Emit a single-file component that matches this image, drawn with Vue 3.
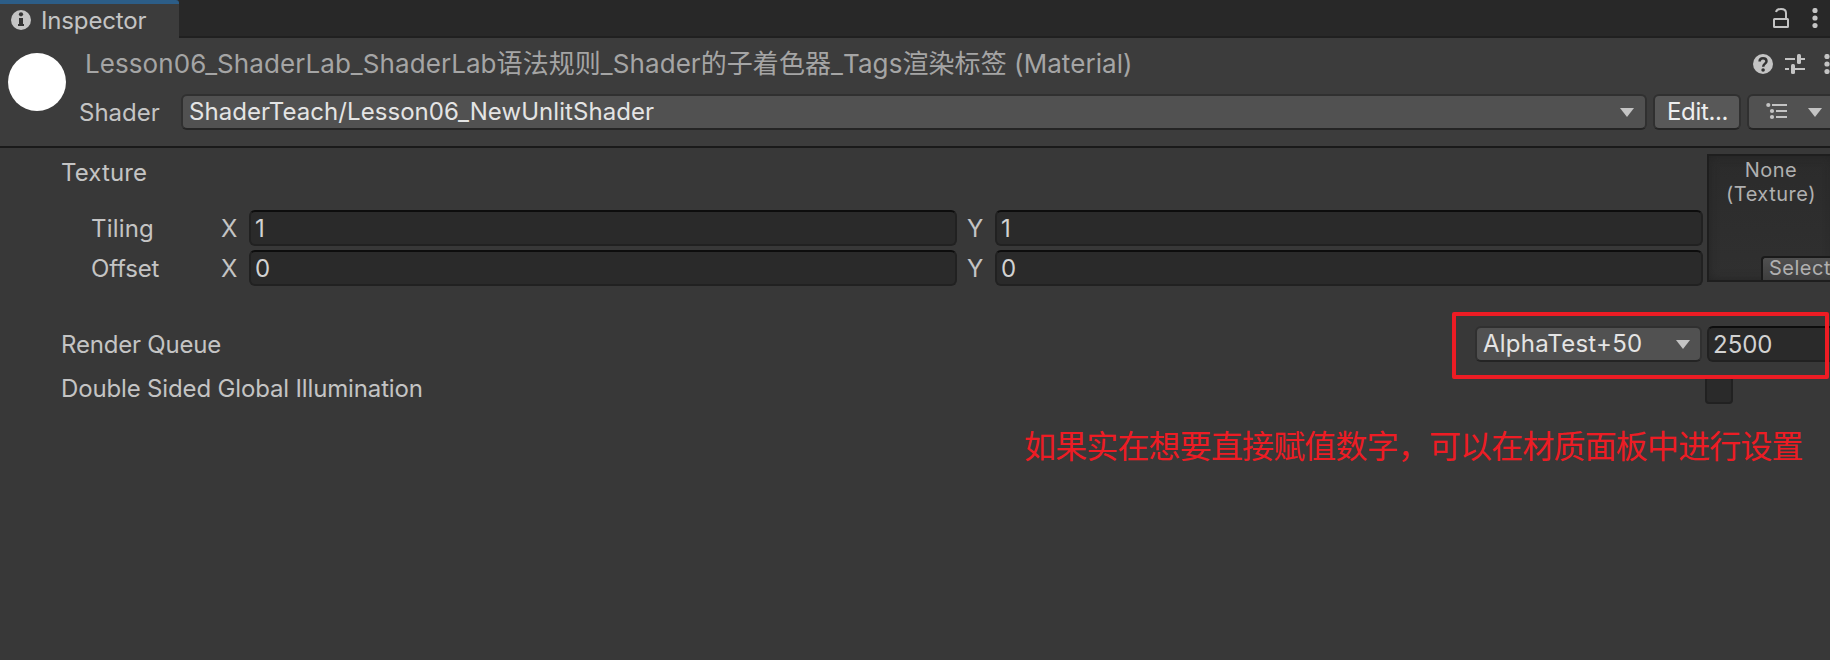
<script setup>
const vectors = [
  { label: 'Tiling', x: '1', y: '1' },
  { label: 'Offset', x: '0', y: '0' },
]
</script>

<template>
  <div class="inspector">
    <div class="tabs">
      <div class="tab">
        <svg class="info" width="20" height="20" viewBox="0 0 20 20">
          <circle cx="10" cy="10" r="10" fill="#c4c4c4" />
          <circle cx="10" cy="4.300" r="2.100" fill="#333" />
          <path d="M8 8h4v6h1v2H7v-2h1z" fill="#333" />
        </svg>
        <span class="t tab-name">Inspector</span>
      </div>
      <svg class="lock" width="18" height="22" viewBox="0 0 18 22" fill="none" stroke="#c4c4c4" stroke-width="2">
        <rect x="2" y="12" width="14" height="8" rx="0.5" />
        <path d="M4 5C4.500 3 6.500 2 9 2C12 2 14 3.500 14 6V12" />
      </svg>
      <svg class="dots" width="6" height="20" viewBox="0 0 6 20" fill="#c4c4c4">
        <circle cx="3" cy="2.500" r="2.600" /><circle cx="3" cy="10" r="2.600" /><circle cx="3" cy="17.500" r="2.600" />
      </svg>
    </div>

    <div class="header">
      <div class="preview"><div class="ball"></div></div>
      <div class="head-main">
        <div class="title-row">
          <span class="t title">Lesson06_ShaderLab_ShaderLab语法规则_Shader的子着色器_Tags渲染标签 (Material)</span>
          <svg class="help" width="20" height="20" viewBox="0 0 20 20">
            <circle cx="10" cy="10" r="10" fill="#c4c4c4" />
            <path d="M6.600 7.600C6.600 5.300 8 4.200 10 4.200C12.100 4.200 13.500 5.400 13.500 7.200C13.500 9.700 10.200 9.600 10.200 12.800" fill="none" stroke="#333" stroke-width="2.500" />
            <circle cx="10.100" cy="16" r="1.800" fill="#333" />
          </svg>
          <svg class="sliders" width="20" height="20" viewBox="0 0 20 20" fill="#c4c4c4">
            <path d="M0 4h10v2H0zM16 4h4v2h-4zM0 14h4v2H0zM10 14h10v2H10z" />
            <rect x="12" y="0" width="4" height="10" rx="1.500" /><rect x="6" y="10" width="4" height="10" rx="1.500" />
          </svg>
          <svg class="dots2" width="6" height="20" viewBox="0 0 6 20" fill="#c4c4c4">
            <circle cx="3" cy="2.500" r="2.600" /><circle cx="3" cy="10" r="2.600" /><circle cx="3" cy="17.500" r="2.600" />
          </svg>
        </div>
        <div class="shader-row">
          <span class="t shader-label">Shader</span>
          <div class="btn shader-drop">
            <span class="t shader-val">ShaderTeach/Lesson06_NewUnlitShader</span>
            <svg class="arrow" width="14" height="9" viewBox="0 0 14 9"><path d="M0 0H14L7 9z" fill="#c4c4c4" /></svg>
          </div>
          <div class="btn edit"><span class="t edit-text">Edit...</span></div>
          <div class="btn preset">
            <svg width="22" height="18" viewBox="0 0 22 18" fill="#c4c4c4">
              <circle cx="2.300" cy="3" r="2.100" /><circle cx="6" cy="9" r="2.100" /><circle cx="6" cy="15" r="2.100" />
              <path d="M6 2h15v2H6zM10 8h11v2H10zM10 14h11v2H10z" />
            </svg>
            <svg class="arrow2" width="14" height="9" viewBox="0 0 14 9"><path d="M0 0H14L7 9z" fill="#c4c4c4" /></svg>
          </div>
        </div>
      </div>
    </div>

    <div class="body">
      <div class="texture">
        <div class="tex-main">
          <div class="t tex-label">Texture</div>
          <div v-for="v in vectors" :key="v.label" class="vec">
            <span class="t vec-label" :class="v.label.toLowerCase()">{{ v.label }}</span>
            <span class="t axis-x">X</span>
            <div class="field fx"><span class="t">{{ v.x }}</span></div>
            <span class="t axis-y">Y</span>
            <div class="field fy"><span class="t">{{ v.y }}</span></div>
          </div>
        </div>
        <div class="slot">
          <div class="none">None</div>
          <div class="none tex-type">(Texture)</div>
          <div class="select"><span>Select</span></div>
        </div>
      </div>

      <div class="row queue">
        <span class="t rq">Render Queue</span>
        <div class="btn queue-drop">
          <span class="t qd">AlphaTest+50</span>
          <svg class="arrow3" width="14" height="9" viewBox="0 0 14 9"><path d="M0 0H14L7 9z" fill="#c4c4c4" /></svg>
        </div>
        <div class="field num"><span class="t nt">2500</span></div>
      </div>
      <div class="row double">
        <span class="t dsgi">Double Sided Global Illumination</span>
        <div class="check"></div>
      </div>
    </div>

    <div class="mark"></div>
    <div class="note">如果实在想要直接赋值数字，可以在材质面板中进行设置</div>
  </div>
</template>

<style>
html, body { margin: 0; overflow: hidden; background: #383838; }
</style>

<style scoped>
* { box-sizing: border-box; }
svg { flex: none; display: block; }
.inspector {
  position: relative; width: 1830px; height: 660px; overflow: hidden;
  background: #383838; color: #c4c4c4;
  font-family: Inter, "Noto Sans CJK SC", sans-serif; font-size: 24px;
}
.t { display: block; flex: none; white-space: nowrap; line-height: 30px; letter-spacing: 0; }
.tabs { display: flex; height: 38px; background: #282828; box-shadow: inset 0 -2px #202020; }
.tab {
  flex: none; display: flex; width: 179px; height: 38px; padding: 6px 0 0 11px;
  background: #3c3c3c; border-top: 4px solid #2c5d87; border-top-right-radius: 3px;
}
.tab-name { margin: -4px 0 0 10px; letter-spacing: -0.15px; }
.lock { margin: 7px 0 0 1593px; }
.dots { margin: 8px 0 0 22px; }
.header { display: flex; height: 110px; background: #3c3c3c; border-bottom: 2px solid #1a1a1a; }
.preview { flex: none; width: 80px; padding: 15px 0 0 8px; }
.ball { width: 58px; height: 58px; border-radius: 50%; background: #fff; }
.head-main { flex: none; width: 1790px; }
.title-row { display: flex; height: 56px; padding-left: 5px; }
.title { width: 1668px; margin: 11px 0 0; color: #a5a5a5; font-size: 26px; line-height: 29px; letter-spacing: 0.07px; }
.help { margin-top: 16px; }
.sliders { margin: 16px 0 0 12px; }
.dots2 { margin: 16px 0 0 19px; }
.shader-row { display: flex; height: 36px; }
.shader-label { width: 102px; margin: 4px 0 0 -1px; }
.btn {
  flex: none; display: flex; height: 36px; background: #515151; border: 2px solid #303030;
  border-bottom-color: #242424; border-radius: 6px; color: #e4e4e4;
}
.shader-drop { width: 1466px; padding: 1px 0 0 6px; justify-content: space-between; }
.shader-val { letter-spacing: 0.06px; }
.arrow { margin: 11px 11px 0 0; }
.edit { width: 88px; margin-left: 6px; background: #585858; color: #eee; padding: 1px 0 0 12px; }
.edit-text { letter-spacing: -0.35px; }
.preset { width: 112px; margin-left: 6px; padding: 6px 0 0 17px; }
.arrow2 { margin: 6px 0 0 20px; }
.texture { display: flex; height: 171px; padding-top: 6px; }
.tex-main { flex: none; width: 1707px; }
.tex-label { height: 56px; padding: 4px 0 0 61px; letter-spacing: 0.1px; }
.vec { display: flex; height: 40px; }
.vec-label { width: 129px; margin: 4px 0 0 91px; }
.tiling { letter-spacing: 0.2px; }
.offset { letter-spacing: -0.15px; }
.axis-x { width: 29px; margin: 4px 0 0 1px; }
.axis-y { width: 28px; margin: 4px 0 0 10px; }
.field {
  flex: none; height: 36px; background: #2a2a2a; border: 2px solid #212121;
  border-top-color: #0d0d0d; border-radius: 6px; color: #d2d2d2; padding: 2px 0 0 4px;
}
.fx { width: 708px; margin-left: -1px; }
.fy { width: 708px; }
.slot {
  flex: none; width: 128px; height: 128px; border: 2px solid #1e1e1e;
  background: linear-gradient(#2b2b2b, #303030); box-shadow: inset 0 0 10px #242424;
  color: #b0b0b0; font-size: 20px; letter-spacing: 0.5px;
}
.none { height: 24px; margin-top: 2px; line-height: 24px; text-align: center; }
.tex-type { margin-top: 0; }
.select {
  height: 24px; margin: 50px 0 0 52px; padding-left: 6px; line-height: 20px;
  background: linear-gradient(#505050, #3e3e3e); border: 2px solid #1a1a1a; border-width: 2px 0 0 2px; border-radius: 4px 0 0 0;
}
.row { display: flex; }
.queue { height: 47px; padding-top: 7px; }
.rq { width: 1414px; margin: 4px 0 0 61px; letter-spacing: -0.2px; }
.queue-drop { width: 227px; padding: 1px 0 0 6px; justify-content: space-between; }
.qd { letter-spacing: 0.25px; }
.arrow3 { margin: 11px 10px 0 0; }
.num { width: 140px; margin-left: 5px; }
.double { height: 40px; padding-top: 8px; }
.dsgi { width: 1644px; margin: 0 0 0 61px; letter-spacing: -0.15px; }
.check { flex: none; width: 28px; height: 28px; border: 2px solid #212121; border-radius: 4px; background: #2a2a2a; margin-top: 2px; }
.mark { position: absolute; left: 1452px; top: 312px; width: 377px; height: 67px; border: 4px solid #ed1c24; border-radius: 2px; }
.note {
  position: absolute; left: 1024px; top: 424px; line-height: 40px; white-space: nowrap;
  font-family: "Noto Sans CJK SC", sans-serif; font-size: 32px; letter-spacing: -0.85px; color: #ed1c24; font-weight: 400;
}
</style>
